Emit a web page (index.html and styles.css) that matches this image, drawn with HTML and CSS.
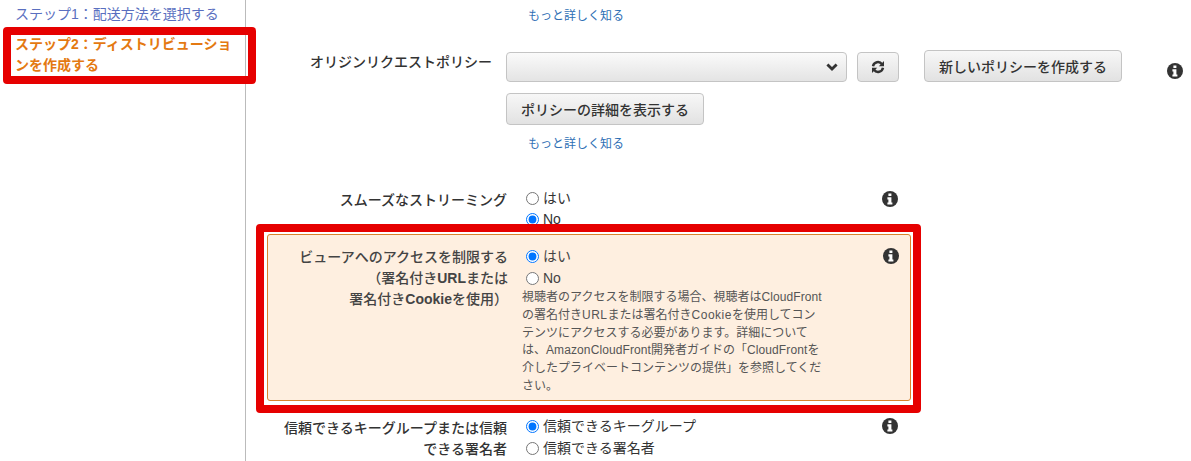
FILE: index.html
```html
<!DOCTYPE html>
<html>
<head>
    <title>CloudFront</title>
    <meta charset="utf-8">
    <link rel="stylesheet" href="styles.css">
</head>
<body>
    <svg class="icon-defs" width="0" height="0">
        <symbol id="info" viewBox="0 0 16 16">
            <circle cx="8" cy="8" r="8" fill="#333"/>
            <path fill="#fff" d="M6.4 2.6h3v2.5h-3zM5.4 6.2h4v5.2h1v2.2H5.4v-2.2h1V8.4h-1z"/>
        </symbol>
    </svg>

    <div class="page">
        <div class="sidebar">
            <a class="step">ステップ1：配送方法を選択する</a>
            <div class="step current">ステップ2：ディストリビューションを作成する</div>
        </div>

        <div class="main">
            <a class="learn first">もっと詳しく知る</a>

            <div class="row policy-row">
                <div class="label policy-label">オリジンリクエストポリシー</div>
                <div class="policy-controls">
                    <div class="policy-top">
                        <div class="select-box">
                            <svg class="chevron" viewBox="0 0 12 8"><path d="M1.4 1.4 6 6l4.6-4.6" fill="none" stroke="#333" stroke-width="2.8"/></svg>
                        </div>
                        <button class="btn refresh">
                            <svg viewBox="0 0 14 14" width="14" height="14"><path fill="none" stroke="#333" stroke-width="2.4" d="M2 6.2a5 5 0 0 1 9-2M12 7.8a5 5 0 0 1-9 2"/><path fill="#333" d="M13 1v5.2H7.8zM1 13V7.8h5.2z"/></svg>
                        </button>
                        <button class="btn create">新しいポリシーを作成する</button>
                        <svg class="info outer"><use href="#info"/></svg>
                    </div>
                    <button class="btn details">ポリシーの詳細を表示する</button>
                </div>
            </div>
            <a class="learn second">もっと詳しく知る</a>

            <div class="row smooth-row">
                <div class="label">スムーズなストリーミング</div>
                <div class="options">
                    <label class="option"><input type="radio" name="smooth">はい</label>
                    <label class="option"><input type="radio" name="smooth" checked>No</label>
                </div>
                <svg class="info"><use href="#info"/></svg>
            </div>

            <div class="highlight">
                <div class="label">ビューアへのアクセスを制限する<br>（署名付き<b>URL</b>または<br>署名付き<b>Cookie</b>を使用）</div>
                <div class="options">
                    <label class="option"><input type="radio" name="viewer" checked>はい</label>
                    <label class="option"><input type="radio" name="viewer">No</label>
                    <p class="help">視聴者のアクセスを制限する場合、視聴者は<span>CloudFront</span><br>の署名付き<span class="wide">URL</span>または署名付き<span class="wide">Cookie</span>を使用してコン<br>テンツにアクセスする必要があります。詳細について<br>は、<span>AmazonCloudFront</span>開発者ガイドの「<span>CloudFront</span>を<br>介したプライベートコンテンツの提供」を参照してくだ<br>さい。</p>
                </div>
                <svg class="info"><use href="#info"/></svg>
            </div>

            <div class="row signer-row">
                <div class="label">信頼できるキーグループまたは信頼できる署名者</div>
                <div class="options">
                    <label class="option"><input type="radio" name="signer" checked>信頼できるキーグループ</label>
                    <label class="option"><input type="radio" name="signer">信頼できる署名者</label>
                </div>
                <svg class="info"><use href="#info"/></svg>
            </div>
        </div>
    </div>

    <!-- red annotation boxes drawn over the screenshot -->
    <div class="callout callout-step"></div>
    <div class="callout callout-viewer"></div>
</body>
</html>
```

FILE: styles.css
```css
html, body {
    margin: 0;
    height: 461px;
    overflow: hidden;
}

body {
    position: relative;
    background: #fff;
    color: #333;
    font-family: "Liberation Sans", "Noto Sans CJK JP", sans-serif;
    font-size: 14px;
}

.icon-defs {
    position: absolute;
}

.page {
    display: flex;
    height: 461px;
}

.sidebar {
    width: 246px;
    flex-shrink: 0;
    box-sizing: border-box;
    border-right: 1px solid #bbb;
    padding: 4px 0 0 15px;
}

.step {
    display: block;
    color: #5a6fc0;
    font-size: 14px;
    line-height: 20px;
}

.step.current {
    color: #e47911;
    font-weight: 700;
    line-height: 21px;
    margin-top: 10px;
}

.main {
    flex: 1;
    min-width: 0;
}

.learn {
    display: block;
    margin-left: 282px;
    color: #2f6fb5;
    font-size: 12px;
    line-height: 16px;
}

.learn.first {
    margin-top: 8px;
}

.learn.second {
    margin-top: 11px;
}

.row {
    display: flex;
    padding-left: 12px;
}

.label {
    width: 249px;
    flex-shrink: 0;
    box-sizing: border-box;
    text-align: right;
    font-weight: 500;
    line-height: 21px;
}

.policy-row {
    margin-top: 26px;
}

.policy-label {
    width: 234px;
    padding-top: 2px;
}

.policy-controls {
    margin-left: 14px;
}

.policy-top {
    display: flex;
    align-items: flex-end;
}

.select-box {
    width: 341px;
    height: 30px;
    box-sizing: border-box;
    border: 1px solid #c4c4c4;
    border-radius: 4px;
    background: linear-gradient(#fafafa, #e4e4e4);
    display: flex;
    align-items: center;
    justify-content: flex-end;
    padding-right: 8px;
}

.chevron {
    width: 12px;
    height: 8px;
}

.btn {
    box-sizing: border-box;
    border: 1px solid #c4c4c4;
    border-radius: 4px;
    background: linear-gradient(#f7f7f7, #e2e2e2);
    color: #333;
    font-family: inherit;
    font-size: 14px;
    font-weight: 500;
    padding: 0;
}

.refresh {
    width: 42px;
    height: 30px;
    margin-left: 10px;
    display: flex;
    align-items: center;
    justify-content: center;
}

.create {
    width: 198px;
    height: 32px;
    margin-left: 25px;
}

.details {
    display: block;
    width: 198px;
    height: 32px;
    margin-top: 11px;
}

.info {
    width: 16px;
    height: 16px;
    flex-shrink: 0;
}

.info.outer {
    margin-left: 45px;
    margin-bottom: 3px;
}

.options {
    margin-left: 19px;
    width: 302px;
    flex-shrink: 0;
}

.option {
    display: flex;
    align-items: center;
    line-height: 21px;
    font-size: 14px;
}

.option input {
    width: 13px;
    height: 13px;
    margin: 0 4px 0 0;
    accent-color: #0075ff;
}

/* second radio is cut by the annotation box in the reference, so leave it room */
.smooth-row {
    margin-top: 36px;
    height: 37px;
}

.smooth-row .label {
    padding-top: 2px;
}

.smooth-row .info {
    margin-left: 54px;
    margin-top: 3px;
}

.highlight {
    display: flex;
    box-sizing: border-box;
    width: 644px;
    height: 167px;
    margin-left: 21px;
    margin-top: 9px;
    padding: 10px 0 0 3px;
    background: #feefe0;
    border: 1px solid #d9822b;
    border-radius: 3px;
    color: #444;
}

.highlight .label {
    width: 237px;
    padding-top: 2px;
}

.highlight .options {
    margin-left: 18px;
}

.highlight .option {
    line-height: 22px;
}

.highlight .info {
    margin-left: 55px;
    margin-top: 3px;
}

.help {
    margin: 0 0 0 -4px;
    white-space: nowrap;
    font-size: 12px;
    line-height: 17.8px;
    color: #555;
}

/* latin runs are wider in the reference than in Liberation Sans */
.help span {
    letter-spacing: 0.1px;
}

.help .wide {
    letter-spacing: 0.5px;
}

.signer-row {
    margin-top: 16px;
}

.signer-row .label {
    padding: 1px 0 0 20px;
}

.signer-row .option {
    line-height: 22px;
}

.signer-row .options {
    margin-top: -2px;
}

.signer-row .info {
    margin-left: 54px;
    margin-top: 1px;
}

/* annotation boxes */
.callout {
    position: absolute;
    box-sizing: border-box;
    border: 8px solid #e60000;
    border-radius: 4px;
    pointer-events: none;
}

.callout-step {
    left: 3px;
    top: 27px;
    width: 253px;
    height: 57px;
}

.callout-viewer {
    left: 256px;
    top: 224px;
    width: 665px;
    height: 189px;
}
```
